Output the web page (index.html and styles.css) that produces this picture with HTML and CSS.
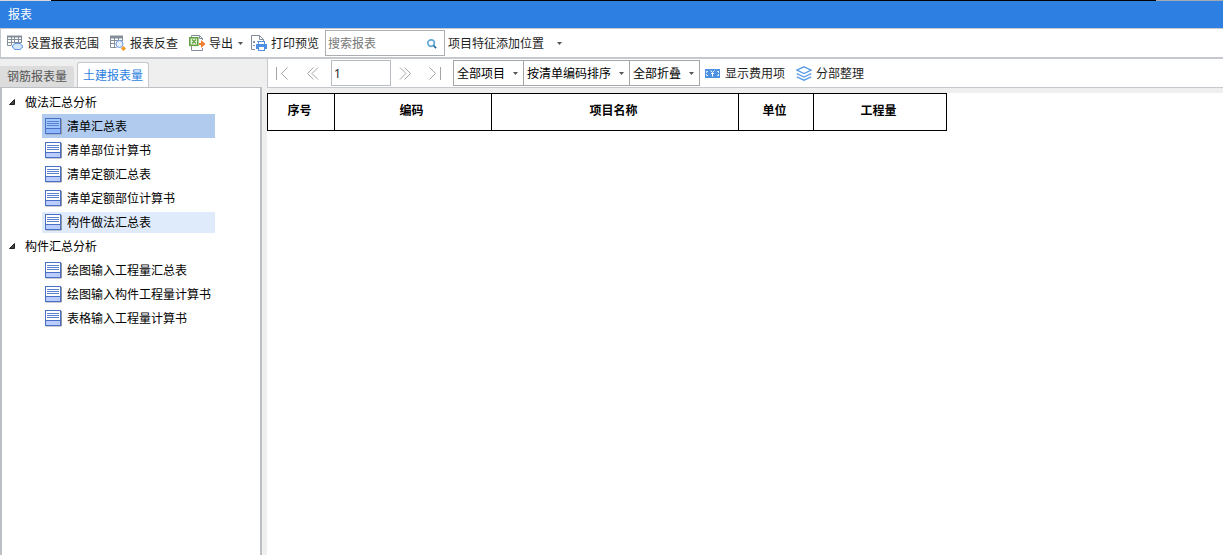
FILE: index.html
```html
<!DOCTYPE html>
<html lang="zh-CN">
<head>
<meta charset="utf-8">
<title>报表</title>
<link rel="stylesheet" href="styles.css">
</head>
<body>
<svg class="defs" width="0" height="0" aria-hidden="true">
  <symbol id="doc" viewBox="0 0 17 17">
    <path d="M1 16h15.500M16.500 1v15" fill="none" stroke="#9498a2"/>
    <rect class="doc-page" x=".5" y=".5" width="15" height="15"/>
    <rect class="doc-foot" x="1" y="11" width="14" height="4"/>
    <path d="M1 10.500h14" stroke="#4a6fc4" fill="none"/><path d="M2 3.500h12M2 5.500h12M2 7.500h12" stroke="#5f80cc" fill="none"/>
  </symbol>
  <symbol id="down" viewBox="0 0 5 3"><path d="M0 0h5L2.500 3z" fill="#555"/></symbol>
</svg>
<div class="app">
  <div class="backdrop"><span class="backdrop-left"></span><span class="backdrop-right"></span></div>
  <header class="titlebar"><h1>报表</h1></header>

  <div class="toolbar">
    <button class="tool tool-range" type="button">
      <svg width="17" height="16" viewBox="0 0 17 16" fill="none"><path d="M.5 1v9.500h4M0 4.500h15M0 7.500h15M4.500 1v9M7.500 1v7M11.500 1v7M14.500 1v7" stroke="#848e9b"/><path d="M0 1.500h15" stroke="#848e9b" stroke-width="2"/><path d="M7.500 8.500h6q0 1.500 2 2v2q-2 .5-2 2h-6q0-1.500-2-2v-2q2-.5 2-2z" fill="#d5e6fb" stroke="#5b98e6"/></svg>
      <span>设置报表范围</span>
    </button>
    <button class="tool tool-check" type="button">
      <svg width="17" height="16" viewBox="0 0 17 16" fill="none"><path d="M.5 1v11.500h6M.5 5.500h12M.5 8.500h5M4.500 3v9M8.500 3v3M12.500 3v3" stroke="#848e9b"/><path d="M0 2h13" stroke="#848e9b" stroke-width="3"/><circle cx="9.500" cy="9" r="3.500" fill="#e5f0ff" stroke="#7199dc"/><path d="M13.500 11l2.500 2.500-2.500 2.500-2.500-2.500z" fill="#f29a20"/></svg>
      <span>报表反查</span>
    </button>
    <button class="tool tool-export" type="button">
      <svg width="17" height="16" viewBox="0 0 17 16" fill="none"><path d="M2.500 2V.5h8l3 3V5M10.500.5v3h3M2.500 11v4.500h11V13" stroke="#848e9b"/><rect x=".8" y="2.800" width="8" height="7.500" fill="#edf7e5" stroke="#64a344" stroke-width="1.600"/><path d="M3 4.500l4 4M7 4.500l-4 4" stroke="#64a344" stroke-width="1.300"/><path d="M10 8h2V5l4.500 4-4.500 4v-3h-2z" fill="#f07c2e"/></svg>
      <span>导出</span>
      <svg class="arrow" width="5" height="3"><use href="#down"/></svg>
    </button>
    <button class="tool tool-print" type="button">
      <svg width="17" height="16" viewBox="0 0 17 16" fill="none"><path d="M4 14.500H.5V.5h8l4 4V6M8.500.5v4h4" stroke="#848e9b"/><path d="M2 6h2v2H2zM2 10h2v1H2zM6 6h2v1H6z" fill="#8197b2"/><path d="M7 6h7v3h2v5h-2v2H7v-2H5V9h2z" fill="#4c8fe3"/><path d="M8 7h5v2H8zM8 12h5v3H8z" fill="#fff"/></svg>
      <span>打印预览</span>
    </button>
    <div class="search">
      <input type="search" aria-label="搜索报表" placeholder="搜索报表">
      <svg width="10" height="10" viewBox="0 0 11 11" fill="none"><circle cx="4.500" cy="4.500" r="3.600" stroke="#62a9d6" stroke-width="1.800"/><path d="M7.300 7.300L10 10" stroke="#286b9e" stroke-width="1.800"/></svg>
    </div>
    <button class="tool tool-feature" type="button"><span>项目特征添加位置</span><svg class="arrow" width="5" height="3"><use href="#down"/></svg></button>
  </div>

  <div class="workspace">
    <aside class="sidebar">
      <div class="tabs" role="tablist">
        <button class="tab" role="tab" aria-selected="false" type="button">钢筋报表量</button>
        <button class="tab active" role="tab" aria-selected="true" type="button">土建报表量</button>
      </div>
      <nav class="tree" aria-label="报表列表">
        <details open>
          <summary><svg width="6" height="6" viewBox="0 0 6 6"><path d="M5.500 .5v5H.5z" fill="#444" stroke="#222"/></svg><span>做法汇总分析</span></summary>
          <ul>
            <li><a class="report selected" href="#"><svg width="17" height="17"><use href="#doc"/></svg><span>清单汇总表</span></a></li>
            <li><a class="report" href="#"><svg width="17" height="17"><use href="#doc"/></svg><span>清单部位计算书</span></a></li>
            <li><a class="report" href="#"><svg width="17" height="17"><use href="#doc"/></svg><span>清单定额汇总表</span></a></li>
            <li><a class="report" href="#"><svg width="17" height="17"><use href="#doc"/></svg><span>清单定额部位计算书</span></a></li>
            <li><a class="report hovered" href="#"><svg width="17" height="17"><use href="#doc"/></svg><span>构件做法汇总表</span></a></li>
          </ul>
        </details>
        <details open>
          <summary><svg width="6" height="6" viewBox="0 0 6 6"><path d="M5.500 .5v5H.5z" fill="#444" stroke="#222"/></svg><span>构件汇总分析</span></summary>
          <ul>
            <li><a class="report" href="#"><svg width="17" height="17"><use href="#doc"/></svg><span>绘图输入工程量汇总表</span></a></li>
            <li><a class="report" href="#"><svg width="17" height="17"><use href="#doc"/></svg><span>绘图输入构件工程量计算书</span></a></li>
            <li><a class="report" href="#"><svg width="17" height="17"><use href="#doc"/></svg><span>表格输入工程量计算书</span></a></li>
          </ul>
        </details>
      </nav>
    </aside>

    <main class="content">
      <div class="viewbar">
        <div class="pager">
          <button class="page-btn" type="button" aria-label="首页"><svg width="13" height="13" viewBox="0 0 13 13"><path d="M.5 0v13M11.500.5l-6 6 6 6"/></svg></button>
          <button class="page-btn" type="button" aria-label="上一页"><svg width="13" height="13" viewBox="0 0 13 13"><path d="M7.500.5l-6 6 6 6M12 .5l-6 6 6 6"/></svg></button>
          <input class="page-no" type="text" aria-label="页码" value="1">
          <button class="page-btn" type="button" aria-label="下一页"><svg width="13" height="13" viewBox="0 0 13 13"><path d="M1 .5l6 6-6 6M5.500.5l6 6-6 6"/></svg></button>
          <button class="page-btn" type="button" aria-label="末页"><svg width="13" height="13" viewBox="0 0 13 13"><path d="M1.500.5l6 6-6 6M12.500 0v13"/></svg></button>
        </div>
        <div class="combos">
          <div class="combo"><select aria-label="项目"><option>全部项目</option></select><svg width="5" height="3"><use href="#down"/></svg></div>
          <div class="combo"><select aria-label="排序"><option>按清单编码排序</option></select><svg width="5" height="3"><use href="#down"/></svg></div>
          <div class="combo"><select aria-label="折叠"><option>全部折叠</option></select><svg width="5" height="3"><use href="#down"/></svg></div>
        </div>
        <button class="tool tool-cost" type="button">
          <svg width="15" height="9" viewBox="0 0 15 9"><path d="M0 0h15v9H0z" fill="#4c91e2"/><path d="M5.500 1.500l2 2 2-2M7.500 4v3.500M6 4.500h3" fill="none" stroke="#fff"/><path d="M1 2h2v1H2v1H1zM14 2h-2v1h1v1h1zM1 7h2V6H2V5H1zM14 7h-2V6h1V5h1z" fill="#cfe2f8"/></svg>
          <span>显示费用项</span>
        </button>
        <button class="tool tool-section" type="button">
          <svg width="16" height="15" viewBox="0 0 16 15" fill="none" stroke="#5b9ce6" stroke-width="1.300"><path d="M8 .8l7.200 3.400L8 7.600.8 4.200zM.8 7.600L8 11l7.200-3.400M.8 10.800L8 14.200l7.200-3.400"/></svg>
          <span>分部整理</span>
        </button>
      </div>
      <div class="sheet">
        <table>
          <colgroup><col class="c-no"><col class="c-code"><col class="c-name"><col class="c-unit"><col class="c-qty"></colgroup>
          <thead><tr><th scope="col">序号</th><th scope="col">编码</th><th scope="col">项目名称</th><th scope="col">单位</th><th scope="col">工程量</th></tr></thead>
        </table>
      </div>
    </main>
  </div>
</div>
</body>
</html>
```

FILE: styles.css
```css
* { box-sizing: border-box; }

body {
  margin: 0;
  background: #efefef;
}

body, button, input, select {
  font-family: "Noto Sans", "Noto Sans CJK SC", sans-serif;
  font-size: 12px;
  line-height: 18px;
  color: #1e1e1e;
}

button {
  border: 0;
  padding: 0;
  background: none;
}

svg { display: block; flex: none; }
.defs { position: absolute; }

.app {
  display: flex;
  flex-direction: column;
  min-height: 100vh;
}

.backdrop {
  display: flex;
  justify-content: space-between;
  height: 1px;
  background: #000;
}
.backdrop-left { width: 51px; background: #d8d8d8; }
.backdrop-right { width: 67px; background: #a5a9b0; }

.titlebar {
  height: 28px;
  padding: 5px 8px 0;
  background: #2d7fe1;
  border-bottom: 1px solid #c5c8cc;
}
.titlebar h1 {
  margin: 0;
  font-size: 12px;
  font-weight: 400;
  color: #fff;
}

.toolbar {
  display: flex;
  align-items: center;
  height: 30px;
  padding-left: 6px;
  background: #fff;
  border-bottom: 2px solid #c5c8cc;
  border-left: 1px solid #c5c8cc;
}

.tool {
  display: flex;
  align-items: center;
  gap: 3px;
  white-space: nowrap;
}
.tool span { padding-top: 2px; }
.tool-check { margin-left: 11px; }
.tool-export { margin-left: 11px; }
.tool-export .arrow { margin-left: 2px; }
.tool-print { margin-left: 8px; }
.tool-feature { margin-left: 3px; gap: 13px; }

.search {
  display: flex;
  align-items: center;
  width: 120px;
  height: 26px;
  margin-left: 6px;
  padding: 1px 7px 0 2px;
  border: 1px solid #aaadb2;
}
.search input {
  flex: 1;
  min-width: 0;
  padding: 0;
  border: 0;
  outline: 0;
  background: none;
}
.search input::placeholder { color: #777; }

.workspace {
  display: flex;
  flex: 1;
}

.sidebar {
  display: flex;
  flex-direction: column;
  flex: none;
  width: 262px;
  padding-top: 3px;
}

.tabs {
  display: flex;
  align-items: flex-end;
  gap: 3px;
}
.tab {
  height: 21px;
  padding: 1px 7px 0;
  border-radius: 0 3px 0 0;
  background: #dcdcdc;
  color: #555;
}
.tab.active {
  height: 25px;
  padding: 1px 5px 0;
  border: 1px solid #c5c8cc;
  border-bottom: 0;
  border-radius: 3px 3px 0 0;
  background: #fff;
  color: #2d7fe1;
}

.tree {
  flex: 1;
  padding-top: 2px;
  border: 2px solid #bcbfc4;
  border-top-width: 1px;
  border-bottom: 0;
  background: #fff;
}
.tree ul {
  margin: 0;
  padding: 0;
  list-style: none;
}
.tree summary {
  display: flex;
  align-items: center;
  gap: 10px;
  height: 24px;
  padding-left: 7px;
  color: #000;
}
.tree span { padding-top: 2px; }
.tree li {
  display: flex;
  align-items: center;
  height: 24px;
  padding-left: 40px;
}
.report {
  display: flex;
  align-items: center;
  gap: 5px;
  min-width: 173px;
  height: 24px;
  padding-left: 3px;
  color: #000;
  text-decoration: none;
  white-space: nowrap;
}
.report svg {
  --page: #fff;
  --foot: #b9cdff;
}
.report.selected { background: #b0cbed; }
.report.selected svg {
  --page: #9fc8ff;
  --foot: #8db8ff;
}
.report.hovered {
  height: 21px;
  background: #dfeafa;
}
.doc-page { fill: var(--page); stroke: #4a6fc4; }
.doc-foot { fill: var(--foot); }

.content {
  display: flex;
  flex-direction: column;
  flex: 1;
  min-width: 0;
  padding-left: 5px;
}

.viewbar {
  display: flex;
  align-items: center;
  height: 29px;
  border: 1px solid #c5c8cc;
  border-width: 0 0 1px 1px;
  background: #fff;
}
.pager {
  display: grid;
  grid-template-columns: 30px 33px 60px 26px 36px;
  align-items: center;
}
.page-btn {
  display: grid;
  place-items: center;
  width: 28px;
  height: 24px;
}
.page-btn:last-child { width: 34px; }
.page-btn path {
  fill: none;
  stroke: #a5a5a5;
}
.page-no {
  width: 60px;
  height: 26px;
  padding: 1px 2px 0;
  border: 1px solid #b8bbc2;
  outline: 0;
}

.combos { display: flex; }
.combo { display: grid; }
.combo + .combo { margin-left: -1px; }
.combo select, .combo svg { grid-area: 1 / 1; }
.combo select {
  appearance: none;
  height: 26px;
  padding: 1px 17px 0 3px;
  border: 1px solid #a5a5a5;
  border-radius: 0;
  background: #fff;
  color: #000;
}
.combo svg {
  place-self: center end;
  margin-right: 6px;
  pointer-events: none;
}
.tool-cost { margin-left: 5px; gap: 5px; }
.tool-section { margin-left: 11px; gap: 4px; }

.sheet {
  flex: 1;
  margin-top: 5px;
  background: #fff;
}
table {
  width: 680px;
  table-layout: fixed;
  border-collapse: collapse;
}
.c-no { width: 67px; }
.c-code { width: 157px; }
.c-name { width: 247px; }
.c-unit { width: 75px; }
.c-qty { width: 133px; }
th {
  height: 37px;
  padding: 0 3px 2px 0;
  border: 1px solid #000;
  color: #000;
  font-weight: 700;
}
```
